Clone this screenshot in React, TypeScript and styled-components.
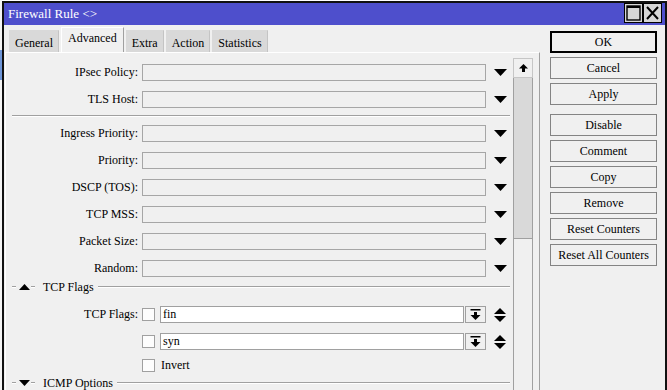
import styled, { createGlobalStyle } from "styled-components";

const GlobalStyle = createGlobalStyle`
  html, body {
    margin: 0;
    padding: 0;
    background: #ffffff;
    overflow: hidden;
  }
  * {
    box-sizing: border-box;
  }
`;

const Screen = styled.div`
  width: 667px;
  height: 390px;
  display: flex;
  overflow: hidden;
  font-family: "Liberation Serif", "Times New Roman", serif;
  font-size: 12px;
  color: #000;
`;

const DesktopEdge = styled.div`
  width: 2px;
  flex: none;
  background: linear-gradient(to bottom, #f4f4f4 0 50px, #6f96d8 50px 80px, #f4f4f4 80px);
`;

const Window = styled.div`
  flex: 1;
  min-width: 0;
  margin-top: 1px;
  border: 2px solid #111;
  border-bottom: none;
  background: #f0f0f0;
  display: flex;
  flex-direction: column;
`;

const TitleBar = styled.div`
  height: 22px;
  flex: none;
  background: #4e4fcc;
  display: flex;
  justify-content: space-between;
  align-items: flex-start;
  padding: 0 3px 0 4px;
`;

const TitleText = styled.div`
  color: #fff;
  font-size: 13px;
  line-height: 22px;
`;

const TitleControls = styled.div`
  display: flex;
`;

const TitleButton = styled.div`
  width: 19px;
  height: 20px;
  border: 1px solid #000;
  background: #d6d6d6;
  display: flex;
  align-items: center;
  justify-content: center;
`;

const Body = styled.div`
  flex: 1;
  min-height: 0;
  display: flex;
`;

const LeftPane = styled.div`
  width: 536px;
  flex: none;
  display: flex;
  flex-direction: column;
`;

const TabRow = styled.div`
  height: 27px;
  flex: none;
  display: flex;
  align-items: flex-end;
  gap: 2px;
  padding-left: 5px;
`;

const Tab = styled.div<{ $active?: boolean }>`
  height: ${(p) => (p.$active ? "25px" : "22px")};
  padding: ${(p) => (p.$active ? "3px 6px 0" : "5px 5px 0")};
  background: ${(p) => (p.$active ? "#f0f0f0" : "#d9d9d9")};
  border-top: 1px solid ${(p) => (p.$active ? "#ffffff" : "#d9d9d9")};
  border-left: 1px solid ${(p) => (p.$active ? "#ffffff" : "#d9d9d9")};
  border-right: 1px solid ${(p) => (p.$active ? "#a0a0a0" : "#c4c4c4")};
  white-space: nowrap;
  line-height: 14px;
`;

const Panel = styled.div`
  flex: 1;
  min-height: 0;
  margin-left: 1px;
  border-top: 1px solid #ffffff;
  border-left: 1px solid #ffffff;
  border-right: 1px solid #a0a0a0;
  display: flex;
  gap: 3px;
  overflow: hidden;
`;

const ScrollContent = styled.div`
  width: 504px;
  flex: none;
  padding-top: 6px;
  overflow: hidden;
`;

const FieldRow = styled.div`
  height: 27px;
  display: grid;
  grid-template-columns: 132px 344px 20px;
  column-gap: 4px;
  align-items: center;
`;

const FieldLabel = styled.div`
  text-align: right;
  white-space: nowrap;
`;

const ComboBox = styled.div`
  height: 17px;
  border: 1px solid #a6a6a6;
  background: #f0f0f0;
`;

const IconCell = styled.div`
  display: flex;
  justify-content: center;
  align-items: center;
`;

const Separator = styled.div`
  height: 2px;
  margin: 2px 0 3px 6px;
  border-top: 1px solid #a0a0a0;
  border-bottom: 1px solid #ffffff;
`;

const SectionHeader = styled.div<{ $gapTop?: number }>`
  height: 10px;
  margin-top: ${(p) => p.$gapTop ?? 0}px;
  padding-left: 6px;
  display: flex;
  align-items: center;
`;

const EtchedLine = styled.div<{ $width?: number }>`
  height: 2px;
  width: ${(p) => (p.$width ? `${p.$width}px` : "auto")};
  flex: ${(p) => (p.$width ? "none" : "1")};
  border-top: 1px solid #a0a0a0;
  border-bottom: 1px solid #ffffff;
`;

const HeaderArrowBox = styled.span`
  display: flex;
  margin: 0 1px 0 3px;
`;

const SectionTitle = styled.div`
  margin: 0 4px 0 8px;
  white-space: nowrap;
  line-height: 10px;
`;

const FlagRow = styled.div<{ $height?: number }>`
  height: ${(p) => p.$height ?? 27}px;
  display: flex;
  align-items: center;
`;

const FlagLabel = styled.div`
  width: 132px;
  margin-right: 4px;
  text-align: right;
  white-space: nowrap;
`;

const CheckBox = styled.div`
  width: 13px;
  height: 13px;
  flex: none;
  border: 1px solid #a0a0a0;
  background: #fdfdfd;
`;

const FlagInput = styled.div`
  width: 304px;
  height: 17px;
  margin-left: 5px;
  padding-left: 2px;
  border: 1px solid #a0a0a0;
  background: #ffffff;
  line-height: 15px;
`;

const PickButton = styled.div`
  width: 21px;
  height: 17px;
  margin-left: 1px;
  border: 1px solid #a0a0a0;
  background: #f0f0f0;
  display: flex;
  align-items: center;
  justify-content: center;
`;

const Spinner = styled.div`
  width: 20px;
  margin-left: 4px;
  display: flex;
  justify-content: center;
`;

const CheckText = styled.div`
  margin-left: 6px;
`;

const Spacer = styled.div<{ $h: number }>`
  height: ${(p) => p.$h}px;
`;

const Scrollbar = styled.div`
  width: 20px;
  flex: none;
  margin-top: 5px;
  display: flex;
  flex-direction: column;
`;

const ScrollUp = styled.div`
  height: 20px;
  flex: none;
  border: 1px solid #c6c6c6;
  background: #f0f0f0;
  display: flex;
  align-items: center;
  justify-content: center;
`;

const ScrollThumb = styled.div`
  height: 161px;
  flex: none;
  background: #d9d9d9;
  border-left: 1px solid #a0a0a0;
  border-right: 1px solid #a0a0a0;
  border-bottom: 1px solid #a0a0a0;
`;

const ScrollTrack = styled.div`
  flex: 1;
  background: #f0f0f0;
  border-left: 1px solid #a0a0a0;
  border-right: 1px solid #a0a0a0;
`;

const ButtonColumn = styled.div`
  padding: 6px 0 0 10px;
  display: flex;
  flex-direction: column;
  gap: 4px;
`;

const ActionButton = styled.div<{ $default?: boolean; $spaced?: boolean }>`
  width: 107px;
  height: 22px;
  margin-top: ${(p) => (p.$spaced ? "5px" : "0")};
  border: 1px solid ${(p) => (p.$default ? "#000" : "#848484")};
  box-shadow: ${(p) => (p.$default ? "inset 0 0 0 1px #000" : "none")};
  background: #f0f0f0;
  display: flex;
  align-items: center;
  justify-content: center;
  white-space: nowrap;
`;

const DropArrow = () => (
  <svg width="13" height="7" viewBox="0 0 13 7">
    <polygon points="0,0 13,0 6.5,7" fill="#000" />
  </svg>
);

const HeaderArrow = ({ up }: { up?: boolean }) => (
  <svg width="11" height="6" viewBox="0 0 11 6">
    <polygon points={up ? "0,6 11,6 5.5,0" : "0,0 11,0 5.5,6"} fill="#000" />
  </svg>
);

const SpinArrows = () => (
  <svg width="12" height="16" viewBox="0 0 12 16">
    <polygon points="0,7 12,7 6,1" fill="#000" />
    <polygon points="0,9 12,9 6,15" fill="#000" />
  </svg>
);

const PickIcon = () => (
  <svg width="11" height="11" viewBox="0 0 11 11">
    <rect x="0.5" y="0" width="10" height="1.5" fill="#000" />
    <rect x="4" y="3" width="3" height="3.5" fill="#000" />
    <polygon points="0.5,6 10.5,6 5.5,11" fill="#000" />
  </svg>
);

const UpIcon = () => (
  <svg width="9" height="8" viewBox="0 0 9 8">
    <polygon points="0,4.5 9,4.5 4.5,0" fill="#000" />
    <rect x="3" y="4" width="3" height="4" fill="#000" />
  </svg>
);

const MaxIcon = () => (
  <svg width="15" height="16" viewBox="0 0 15 16">
    <rect x="1" y="1" width="13" height="14" fill="none" stroke="#000" strokeWidth="1.4" />
    <rect x="1" y="1" width="13" height="2" fill="#000" />
  </svg>
);

const CloseIcon = () => (
  <svg width="15" height="16" viewBox="0 0 15 16">
    <path d="M2 2 L13 14 M13 2 L2 14" stroke="#000" strokeWidth="2" />
  </svg>
);

const fields = ["IPsec Policy:", "TLS Host:"];
const priorityFields = [
  "Ingress Priority:",
  "Priority:",
  "DSCP (TOS):",
  "TCP MSS:",
  "Packet Size:",
  "Random:",
];
const tabs = ["General", "Advanced", "Extra", "Action", "Statistics"];
const buttons = [
  "OK",
  "Cancel",
  "Apply",
  "Disable",
  "Comment",
  "Copy",
  "Remove",
  "Reset Counters",
  "Reset All Counters",
];

const Field = ({ label }: { label: string }) => (
  <FieldRow>
    <FieldLabel>{label}</FieldLabel>
    <ComboBox />
    <IconCell>
      <DropArrow />
    </IconCell>
  </FieldRow>
);

const Flag = ({ label, value }: { label?: string; value: string }) => (
  <FlagRow>
    <FlagLabel>{label}</FlagLabel>
    <CheckBox />
    <FlagInput>{value}</FlagInput>
    <PickButton>
      <PickIcon />
    </PickButton>
    <Spinner>
      <SpinArrows />
    </Spinner>
  </FlagRow>
);

const Header = ({ title, open, gapTop }: { title: string; open?: boolean; gapTop?: number }) => (
  <SectionHeader $gapTop={gapTop}>
    <EtchedLine $width={4} />
    <HeaderArrowBox>
      <HeaderArrow up={open} />
    </HeaderArrowBox>
    <EtchedLine $width={4} />
    <SectionTitle>{title}</SectionTitle>
    <EtchedLine />
  </SectionHeader>
);

const App = () => {
  return (
    <>
      <GlobalStyle />
      <Screen>
        <DesktopEdge />
        <Window>
          <TitleBar>
            <TitleText>Firewall Rule &lt;&gt;</TitleText>
            <TitleControls>
              <TitleButton>
                <MaxIcon />
              </TitleButton>
              <TitleButton>
                <CloseIcon />
              </TitleButton>
            </TitleControls>
          </TitleBar>
          <Body>
            <LeftPane>
              <TabRow>
                {tabs.map((t) => (
                  <Tab key={t} $active={t === "Advanced"}>
                    {t}
                  </Tab>
                ))}
              </TabRow>
              <Panel>
                <ScrollContent>
                  {fields.map((f) => (
                    <Field key={f} label={f} />
                  ))}
                  <Separator />
                  {priorityFields.map((f) => (
                    <Field key={f} label={f} />
                  ))}
                  <Header title="TCP Flags" open />
                  <Spacer $h={9} />
                  <Flag label="TCP Flags:" value="fin" />
                  <Flag value="syn" />
                  <FlagRow $height={20}>
                    <FlagLabel />
                    <CheckBox />
                    <CheckText>Invert</CheckText>
                  </FlagRow>
                  <Header title="ICMP Options" gapTop={3} />
                </ScrollContent>
                <Scrollbar>
                  <ScrollUp>
                    <UpIcon />
                  </ScrollUp>
                  <ScrollThumb />
                  <ScrollTrack />
                </Scrollbar>
              </Panel>
            </LeftPane>
            <ButtonColumn>
              {buttons.map((b) => (
                <ActionButton key={b} $default={b === "OK"} $spaced={b === "Disable"}>
                  {b}
                </ActionButton>
              ))}
            </ButtonColumn>
          </Body>
        </Window>
      </Screen>
    </>
  );
};

export default App;
